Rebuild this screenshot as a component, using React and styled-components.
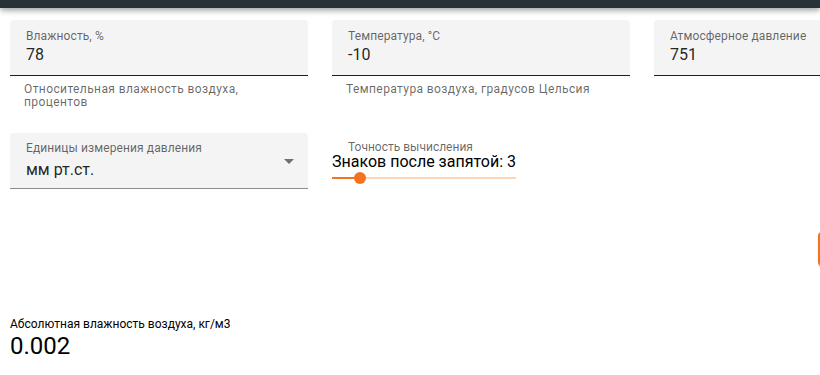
import styled, { createGlobalStyle } from "styled-components";

const GlobalStyle = createGlobalStyle`
  html, body {
    margin: 0;
    padding: 0;
    overflow: hidden;
    background: #fff;
    font-family: Roboto, "Noto Sans", Arial, sans-serif;
    color: rgba(0, 0, 0, 0.87);
  }
`;

const AppBar = styled.div`
  height: 8px;
  background: #263238;
  box-shadow: 0 2px 4px -1px rgba(0, 0, 0, 0.2), 0 4px 5px 0 rgba(0, 0, 0, 0.14),
    0 1px 10px 0 rgba(0, 0, 0, 0.12);
`;

const Page = styled.div`
  width: 952px;
  padding: 12px 10px 0;
`;

const Grid = styled.div`
  display: grid;
  grid-template-columns: repeat(3, 298px);
  column-gap: 24px;
  align-items: start;
  margin-bottom: ${(p) => p.$mb || 0}px;
`;

const Field = styled.div`
  display: flex;
  flex-direction: column;
`;

const Filled = styled.div`
  position: relative;
  height: 55px;
  background: #f4f4f4;
  border-radius: 4px 4px 0 0;
  border-bottom: 1px solid ${(p) => (p.$muted ? "#8c8c8c" : "#1f1f1f")};
`;

const Label = styled.div`
  position: absolute;
  left: 16px;
  top: ${(p) => p.$top || 9}px;
  font-size: 12px;
  line-height: 14px;
  color: rgba(0, 0, 0, 0.6);
  letter-spacing: 0.1px;
  white-space: nowrap;
`;

const Value = styled.div`
  position: absolute;
  left: 16px;
  top: ${(p) => p.$top || 25}px;
  font-size: 16px;
  line-height: 19px;
  color: rgba(0, 0, 0, 0.87);
`;

const Helper = styled.div`
  margin: 7px 14px 0;
  font-size: 12px;
  line-height: 13px;
  letter-spacing: 0.4px;
  color: rgba(0, 0, 0, 0.6);
`;

const Arrow = styled.svg`
  position: absolute;
  right: 7px;
  top: 16px;
  width: 24px;
  height: 24px;
  fill: rgba(0, 0, 0, 0.54);
`;

const SliderBox = styled.div`
  display: flex;
  flex-direction: column;
  padding-top: 9px;
`;

const SmallLabel = styled.div`
  margin-left: 16px;
  font-size: 12px;
  line-height: 11px;
  color: rgba(0, 0, 0, 0.6);
`;

const SliderTitle = styled.div`
  font-size: 16px;
  line-height: 17px;
  color: #000;
`;

const Slider = styled.div`
  position: relative;
  width: 184px;
  height: 16px;
`;

const Rail = styled.div`
  position: absolute;
  left: 0;
  right: 0;
  top: 7px;
  height: 2px;
  background: #fdd5bb;
`;

const Track = styled.div`
  position: absolute;
  left: 0;
  top: 7px;
  height: 2px;
  background: #f4731f;
`;

const Thumb = styled.div`
  position: absolute;
  top: 2px;
  width: 12px;
  height: 12px;
  margin-left: -6px;
  border-radius: 50%;
  background: #f4731f;
`;

const ActionRow = styled.div`
  display: flex;
  justify-content: flex-end;
  margin-top: 43px;
`;

const Button = styled.button`
  width: 144px;
  height: 34px;
  border: none;
  border-radius: 4px;
  background: #f4731f;
  box-shadow: 0 3px 1px -2px rgba(0, 0, 0, 0.2), 0 2px 2px 0 rgba(0, 0, 0, 0.14);
`;

const Result = styled.div`
  margin-top: 51px;
`;

const ResultLabel = styled.div`
  font-size: 12px;
  line-height: 14px;
  color: #000;
`;

const ResultValue = styled.div`
  font-size: 24px;
  line-height: 30px;
  color: #000;
`;

const TextField = ({ label, value, helper }) => (
  <Field>
    <Filled>
      <Label>{label}</Label>
      <Value>{value}</Value>
    </Filled>
    {helper && <Helper>{helper}</Helper>}
  </Field>
);

const min = 0;
const max = 20;
const digits = 3;

export default function App() {
  const pct = ((digits - min) / (max - min)) * 100;
  return (
    <>
      <GlobalStyle />
      <AppBar />
      <Page>
        <Grid $mb={24}>
          <TextField
            label="Влажность, %"
            value="78"
            helper="Относительная влажность воздуха, процентов"
          />
          <TextField
            label="Температура, °C"
            value="-10"
            helper="Температура воздуха, градусов Цельсия"
          />
          <TextField label="Атмосферное давление" value="751" />
        </Grid>
        <Grid>
          <Field>
            <Filled $muted>
              <Label $top={8}>Единицы измерения давления</Label>
              <Value $top={27}>мм рт.ст.</Value>
              <Arrow viewBox="0 0 24 24">
                <path d="M7 10l5 5 5-5z" />
              </Arrow>
            </Filled>
          </Field>
          <SliderBox>
            <SmallLabel>Точность вычисления</SmallLabel>
            <SliderTitle>Знаков после запятой: {digits}</SliderTitle>
            <Slider>
              <Rail />
              <Track style={{ width: `${pct}%` }} />
              <Thumb style={{ left: `${pct}%` }} />
            </Slider>
          </SliderBox>
        </Grid>
        <ActionRow>
          <Button aria-label="Рассчитать" />
        </ActionRow>
        <Result>
          <ResultLabel>Абсолютная влажность воздуха, кг/м3</ResultLabel>
          <ResultValue>0.002</ResultValue>
        </Result>
      </Page>
    </>
  );
}
